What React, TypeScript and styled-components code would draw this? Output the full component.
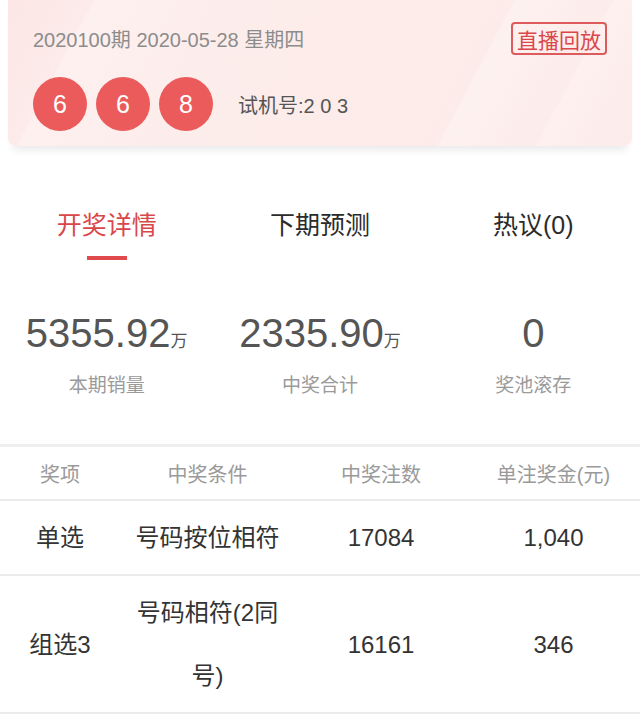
import React from 'react';
import styled, {createGlobalStyle} from 'styled-components';

const GlobalStyle = createGlobalStyle`
  body {
    margin: 0;
    background: #fff;
    font-family: "Liberation Sans", "Noto Sans CJK SC", sans-serif;
  }
`

type PrizeRowType = {
    name: string
    condition: string
    count: string
    money: string
}

const balls = ['6', '6', '8']

const tabs = ['开奖详情', '下期预测', '热议(0)']

const stats = [
    {value: '5355.92', unit: '万', label: '本期销量'},
    {value: '2335.90', unit: '万', label: '中奖合计'},
    {value: '0', unit: '', label: '奖池滚存'},
]

const rows: PrizeRowType[] = [
    {name: '单选', condition: '号码按位相符', count: '17084', money: '1,040'},
    {name: '组选3', condition: '号码相符(2同号)', count: '16161', money: '346'},
]

export default function App() {
    return (
        <Page>
            <GlobalStyle/>
            <Card>
                <TitleRow>
                    <Issue>2020100期 2020-05-28 星期四</Issue>
                    <ReplayButton>直播回放</ReplayButton>
                </TitleRow>
                <BallRow>
                    {balls.map((b, i) => <Ball key={i}>{b}</Ball>)}
                    <TestNumber>试机号:2 0 3</TestNumber>
                </BallRow>
            </Card>

            <Tabs>
                {tabs.map((t, i) => (
                    <Tab key={t} active={i === 0}>
                        {t}
                        <Underline active={i === 0}/>
                    </Tab>
                ))}
            </Tabs>

            <Stats>
                {stats.map(s => (
                    <Stat key={s.label}>
                        <Value>{s.value}<Unit>{s.unit}</Unit></Value>
                        <Label>{s.label}</Label>
                    </Stat>
                ))}
            </Stats>

            <Table>
                <HeadRow>
                    <span>奖项</span>
                    <span>中奖条件</span>
                    <span>中奖注数</span>
                    <span>单注奖金(元)</span>
                </HeadRow>
                {rows.map(r => (
                    <BodyRow key={r.name}>
                        <Cell>{r.name}</Cell>
                        <Cell>{r.condition}</Cell>
                        <Cell>{r.count}</Cell>
                        <Cell>{r.money}</Cell>
                    </BodyRow>
                ))}
            </Table>
        </Page>
    );
}

const Page = styled.div`
  width: 640px;
  min-height: 720px;
  overflow: hidden;
`
const Card = styled.div`
  margin: 0 8px;
  padding: 22px 25px 15px;
  border-radius: 0 0 8px 8px;
  background: linear-gradient(118deg,
  #fbe6e5 0%, #fcebea 12%, #fdf0ef 12.5%, #fcecea 40%,
  #fcebe9 72%, #fdf1f0 72.5%, #fcecea 86%, #fdf0ef 86.5%, #fcebea 100%);
  box-shadow: 0 9px 9px -5px rgba(0, 0, 0, 0.09);
`
const TitleRow = styled.div`
  display: flex;
  justify-content: space-between;
  align-items: center;
`
const Issue = styled.span`
  font-size: 20px;
  color: #8c8c8c;
`
const ReplayButton = styled.span`
  height: 29px;
  padding: 0 4px;
  display: flex;
  align-items: center;
  border: 2px solid #de5b5d;
  border-radius: 4px;
  color: #d9474b;
  font-size: 21px;
`
const BallRow = styled.div`
  display: flex;
  align-items: center;
  gap: 9px;
  margin-top: 22px;
`
const Ball = styled.span`
  width: 54px;
  height: 54px;
  border-radius: 50%;
  background: #ec5b5c;
  color: #fff;
  font-size: 25px;
  display: flex;
  align-items: center;
  justify-content: center;
`
const TestNumber = styled.span`
  margin-left: 16px;
  font-size: 20px;
  color: #555;
`
const Tabs = styled.div`
  display: grid;
  grid-template-columns: repeat(3, 1fr);
  margin-top: 62px;
`
const Tab = styled.div<{ active: boolean }>`
  display: flex;
  flex-direction: column;
  align-items: center;
  font-size: 25px;
  line-height: 34px;
  color: ${props => props.active ? '#d9474b' : '#2b2b2b'};
`
const Underline = styled.span<{ active: boolean }>`
  width: 40px;
  height: 4px;
  margin-top: 14px;
  background: ${props => props.active ? '#e04a4c' : 'transparent'};
`
const Stats = styled.div`
  display: grid;
  grid-template-columns: repeat(3, 1fr);
  padding: 49px 0 45px;
`
const Stat = styled.div`
  display: flex;
  flex-direction: column;
  align-items: center;
`
const Value = styled.div`
  font-size: 40px;
  line-height: 48px;
  color: #555;
`
const Unit = styled.span`
  font-size: 17px;
`
const Label = styled.div`
  margin-top: 7px;
  font-size: 19px;
  line-height: 26px;
  color: #9a9a9a;
`
const Table = styled.div`
  border-top: 3px solid #efefef;
`
const HeadRow = styled.div`
  display: grid;
  grid-template-columns: 120px 175px 172px 173px;
  align-items: center;
  height: 52px;
  text-align: center;
  font-size: 20px;
  color: #9a9a9a;
  border-bottom: 2px solid #ebebeb;
`
const BodyRow = styled.div`
  display: grid;
  grid-template-columns: 120px 175px 172px 173px;
  align-items: center;
  padding: 5px 0;
  border-bottom: 2px solid #ebebeb;
`
const Cell = styled.div`
  padding: 0 10px;
  text-align: center;
  font-size: 24px;
  line-height: 63px;
  color: #333;
`
